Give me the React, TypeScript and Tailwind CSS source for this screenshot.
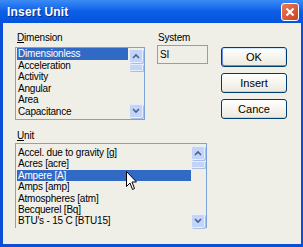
import React from "react";

const font = { fontFamily: '"Liberation Sans", Arial, sans-serif' };

const dims = ["Dimensionless", "Acceleration", "Activity", "Angular", "Area", "Capacitance"];
const units = [
  "Accel. due to gravity [g]",
  "Acres [acre]",
  "Ampere [A]",
  "Amps [amp]",
  "Atmospheres [atm]",
  "Becquerel [Bq]",
  "BTU's - 15 C [BTU15]",
];

const ScrollBtn = ({ dir }: { dir: "up" | "down" }) => (
  <div className="h-[14px] w-[14px] rounded-[2px] border border-[#e6eefc] bg-[#c3d4fa] flex items-center justify-center shadow-[1px_1px_0_#a9bfe6]">
    <svg width="8" height="6" viewBox="0 0 8 6">
      <path
        d={dir === "up" ? "M1 5 L4 2 L7 5" : "M1 1 L4 4 L7 1"}
        fill="none"
        stroke="#4d6185"
        strokeWidth="1.6"
      />
    </svg>
  </div>
);

const Thumb = () => (
  <div className="h-[7px] w-[14px] rounded-[1px] border border-[#e6eefc] bg-[#c3d4fa] shadow-[1px_1px_0_#a9bfe6]" />
);

const XpButton = ({ label, isDefault }: { label: string; isDefault?: boolean }) => (
  <div
    className={`h-[20px] w-[66px] rounded-[3px] border border-[#003c74] bg-gradient-to-b from-[#ffffff] to-[#ece9dd] flex items-center justify-center text-[11px] text-black ${
      isDefault ? "shadow-[inset_1px_-1px_0_#6d8ce6,inset_-1px_1px_0_#cee7ff]" : "shadow-[inset_0_-1px_0_#d6d0c5]"
    }`}
  >
    {label}
  </div>
);

export default function App() {
  return (
    <div className="w-[303px] h-[247px] flex flex-col bg-[#0b4fd8] overflow-hidden" style={font}>
      {/* title bar */}
      <div className="h-[23px] shrink-0 flex items-center justify-between pl-[7px] pr-[4px] bg-gradient-to-b from-[#3b8bf5] via-[#0c5ee8] to-[#0553dc]">
        <span className="text-white font-bold text-[12px] tracking-[0.2px] [text-shadow:1px_1px_0_#0a2a8a]">
          Insert Unit
        </span>
        <div className="w-[18px] h-[18px] rounded-[3px] border border-white bg-gradient-to-br from-[#e97a5a] to-[#c8401f] flex items-center justify-center">
          <svg width="10" height="10" viewBox="0 0 10 10">
            <path d="M1.5 1.5 L8.5 8.5 M8.5 1.5 L1.5 8.5" stroke="white" strokeWidth="2" />
          </svg>
        </div>
      </div>

      {/* body */}
      <div className="flex-1 ml-[3px] mr-[2px] mb-[3px] bg-[#f0efe7] pl-[12px] pt-[9px] text-[10px] tracking-[-0.2px] text-black leading-[12px]">
        <div className="flex">
          {/* Dimension */}
          <div className="flex flex-col">
            <div className="pl-[2px] h-[12px]">
              <span className="underline">D</span>imension
            </div>
            <div className="mt-[3px] w-[130px] h-[73px] border border-[#7aa2dc] flex">
              <div className="flex-1 pl-[1px] overflow-hidden">
                {dims.map((d, i) => (
                  <div
                    key={d}
                    className={`h-[11.6px] leading-[11.6px] pl-[1px] ${i === 0 ? "bg-[#316ac5] text-white" : ""}`}
                  >
                    {d}
                  </div>
                ))}
              </div>
              <div className="w-[16px] flex flex-col pt-[1px] pb-[1px] pl-[1px]">
                <ScrollBtn dir="up" />
                <div className="mt-[1px]">
                  <Thumb />
                </div>
                <div className="flex-1" />
                <ScrollBtn dir="down" />
              </div>
            </div>
          </div>

          {/* System */}
          <div className="ml-[12px] flex flex-col">
            <div className="pl-[1px] h-[12px]">System</div>
            <div className="mt-[1px] w-[51px] h-[19px] border border-[#7aa2dc] pl-[2px] flex items-center">SI</div>
          </div>

          {/* Buttons */}
          <div className="ml-[13px] pt-[15px] flex flex-col gap-[6px] tracking-normal">
            <XpButton label="OK" isDefault />
            <XpButton label="Insert" />
            <XpButton label="Cance" />
          </div>
        </div>

        {/* Unit */}
        <div className="mt-[10px] pl-[2px] h-[12px]">
          <span className="underline">U</span>nit
        </div>
        <div className="mt-[1px] w-[192px] h-[85px] border-t border-l border-r border-[#7aa2dc] flex">
          <div className="flex-1 pl-[1px] pt-[3px] overflow-hidden">
            {units.map((u, i) => (
              <div
                key={u}
                className={`h-[11.4px] leading-[11.4px] pl-[1px] whitespace-nowrap ${i === 2 ? "bg-[#316ac5] text-white" : ""}`}
              >
                {u}
              </div>
            ))}
          </div>
          <div className="w-[15px] flex flex-col pt-[2px] pr-[1px]">
            <ScrollBtn dir="up" />
            <div className="mt-[1px]">
              <Thumb />
            </div>
            <div className="flex-1" />
            <ScrollBtn dir="down" />
          </div>
        </div>
      </div>

      {/* mouse pointer */}
      <svg className="absolute left-[126px] top-[171px]" width="12" height="20" viewBox="0 0 12 20">
        <path d="M0.5 0.5 L0.5 15.5 L4 12 L6.5 18.5 L8.5 17.5 L6 11 L10.5 11 Z" fill="white" stroke="black" strokeWidth="1" />
      </svg>
    </div>
  );
}
